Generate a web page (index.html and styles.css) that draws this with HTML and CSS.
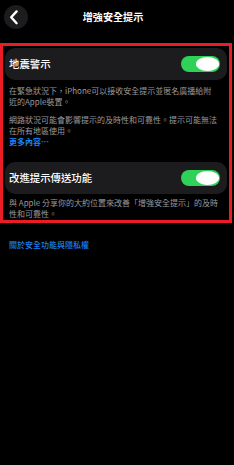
FILE: index.html
```html
<!DOCTYPE html>
<html lang="zh-Hant">
<head>
<meta charset="utf-8">
<title>增強安全提示</title>
<link rel="stylesheet" href="styles.css">
</head>
<body>
<header class="nav">
  <button class="back" aria-label="返回">
    <svg width="24" height="24" viewBox="0 0 24 24"><path d="M12.6 6.4 L7.2 12.3 L12.6 18.2" fill="none" stroke="#fff" stroke-width="2.4" stroke-linecap="round" stroke-linejoin="round"/></svg>
  </button>
  <h1 class="title">增強安全提示</h1>
  <span class="spacer"></span>
</header>
<section class="highlight">
  <div class="card">
    <span class="label">地震警示</span>
    <span class="switch"><span class="knob"></span></span>
  </div>
  <div class="desc">
    <p>在緊急狀況下，iPhone可以接收安全提示並匿名廣播給附<br>近的Apple裝置。</p>
    <p class="gap">網路狀況可能會影響提示的及時性和可靠性。提示可能無法<br>在所有地區使用。<br><a class="more" href="#">更多內容⋯</a></p>
  </div>
  <div class="card card-second">
    <span class="label">改進提示傳送功能</span>
    <span class="switch"><span class="knob"></span></span>
  </div>
  <div class="desc desc-last">
    <p>與 Apple 分享你的大約位置來改善「增強安全提示」的及時<br>性和可靠性。</p>
  </div>
</section>
<a class="footer-link" href="#">關於安全功能與隱私權</a>
</body>
</html>
```
FILE: styles.css
```css
* { box-sizing: border-box; }
html, body { margin: 0; padding: 0; }
body {
  background: #000;
  width: 234px;
  height: 465px;
  overflow: hidden;
  font-family: "Noto Sans CJK TC", "Noto Sans", sans-serif;
  color: #fff;
}
.nav {
  display: grid;
  grid-template-columns: 24px 1fr 24px;
  align-items: center;
  padding: 5px 12px 0 4px;
  height: 43px;
  align-content: start;
}
.back {
  width: 24px;
  height: 24px;
  border-radius: 50%;
  background: #1c1c1e;
  border: 0;
  padding: 0;
  display: flex;
  align-items: center;
  justify-content: center;
}
.back svg { display: block; }
.title {
  margin: 0;
  text-align: center;
  font-size: 10.1px;
  font-weight: 700;
  line-height: 24px;
  color: #fff;
}
.highlight {
  width: 232px;
  border: 3px solid #ec1c24;
  padding: 2px 2px 1px;
}
.card {
  height: 32px;
  background: #1c1c1e;
  border-radius: 10px;
  display: flex;
  align-items: center;
  justify-content: space-between;
  padding: 0 7px 0 4px;
}
.card-second { margin-top: 15.5px; }
.label {
  font-size: 10.4px;
  font-weight: 500;
  line-height: 12px;
}
.switch {
  width: 39px;
  height: 16px;
  border-radius: 8px;
  background: #30d158;
  display: flex;
  align-items: center;
  justify-content: flex-end;
  padding-right: 1px;
}
.knob {
  width: 23px;
  height: 14px;
  border-radius: 50%;
  background: #fff;
}
.desc {
  padding: 4.5px 6px 0 4px;
  font-size: 8px;
  line-height: 11px;
  color: #9a9a9f;
}
.desc p { margin: 0; }
.desc .gap { margin-top: 7px; }
.desc-last { padding-top: 4px; line-height: 10.5px; }
.more {
  color: #1a84f5;
  font-weight: 700;
  text-decoration: none;
}
.footer-link {
  display: block;
  margin-top: 15.5px;
  padding-left: 9px;
  font-size: 8px;
  line-height: 11px;
  font-weight: 500;
  color: #1a7fee;
  text-decoration: none;
}
```
